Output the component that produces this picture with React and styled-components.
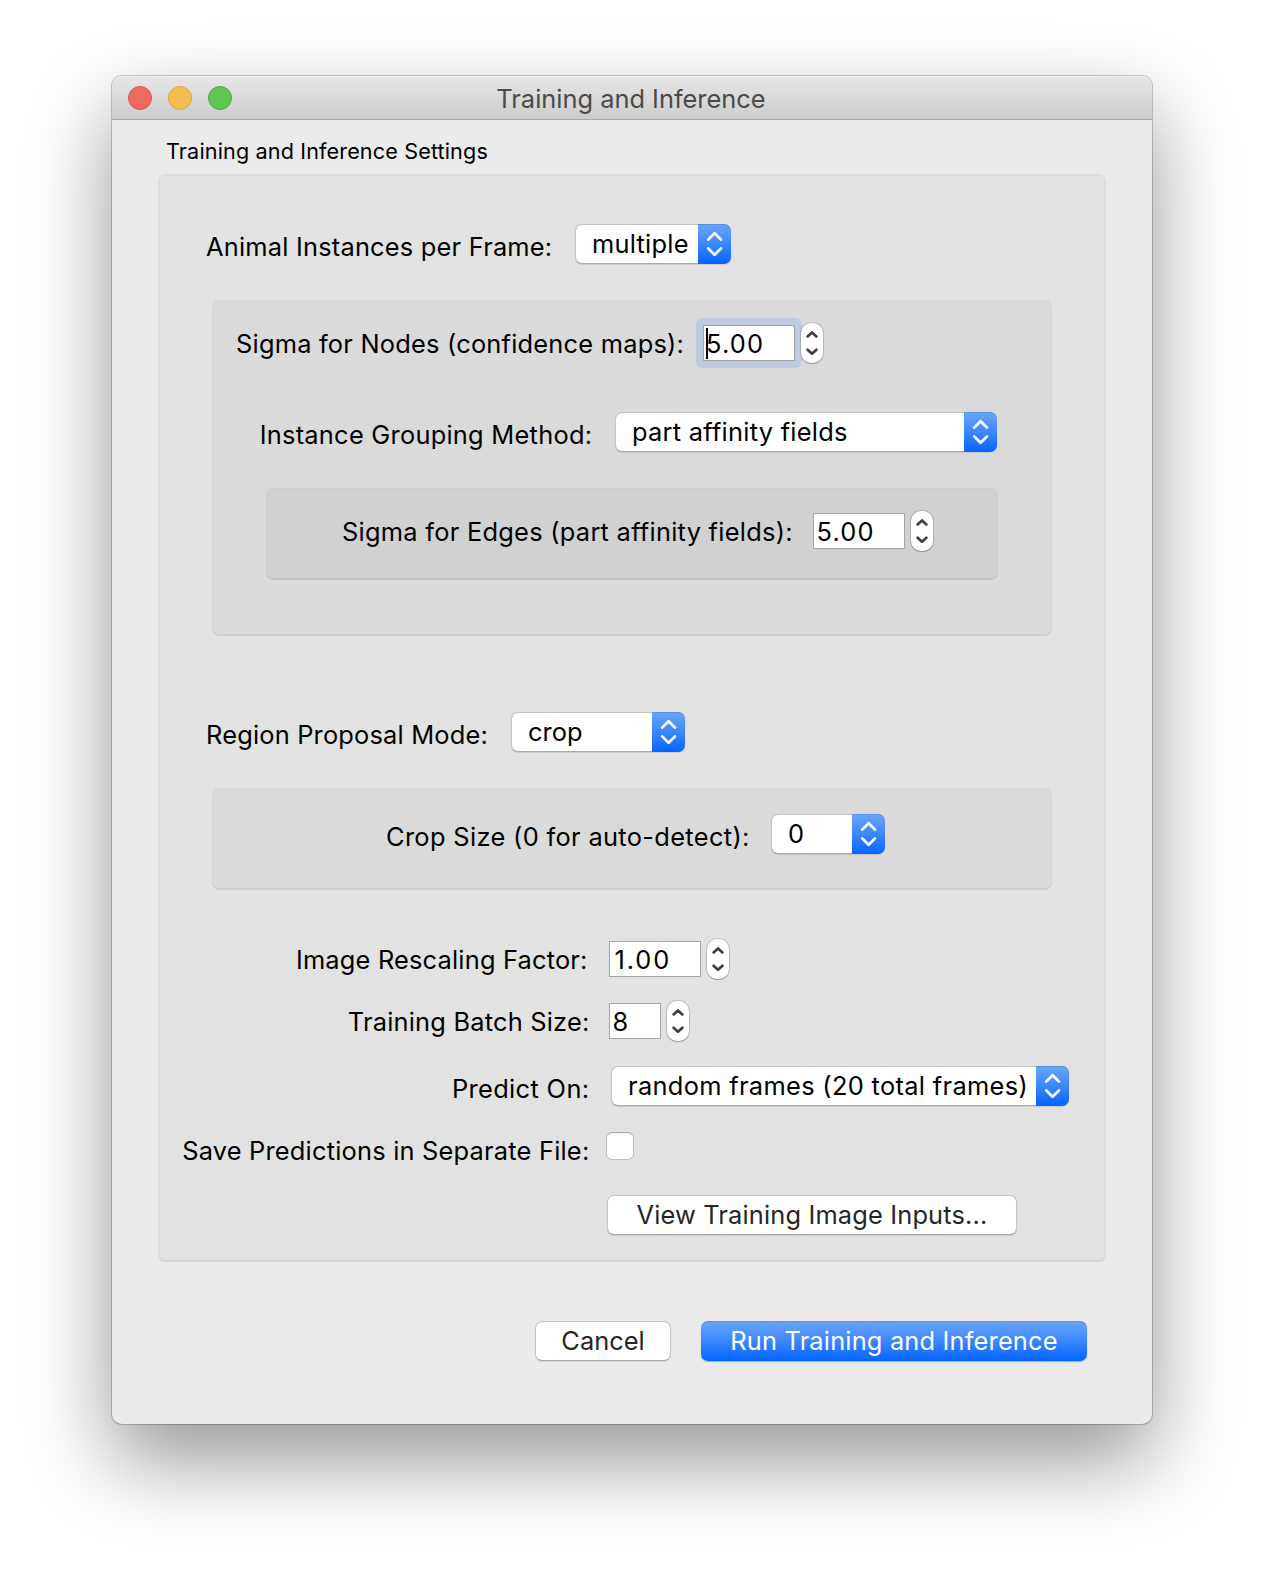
import React from "react";
import styled, { createGlobalStyle, css } from "styled-components";

const GlobalStyle = createGlobalStyle`
  *, *::before, *::after { box-sizing: border-box; }
  body { margin: 0; background: #fff; }
`;

const Desktop = styled.div`
  width: 1264px;
  height: 1572px;
  padding: 76px 112px;
  overflow: hidden;
  background: #fff;
  color: #000;
  font: 400 25.4px/30px Inter, "Liberation Sans", sans-serif;
  white-space: nowrap;
`;

const Window = styled.main`
  width: 1040px;
  height: 1348px;
  border-radius: 10px;
  background: #ebebeb;
  box-shadow: 0 0 0 1px rgba(0, 0, 0, 0.2), 0 36px 84px rgba(0, 0, 0, 0.42);
`;

const TitleBar = styled.header`
  display: grid;
  grid-template-columns: 1fr auto 1fr;
  align-items: center;
  height: 44px;
  padding: 0 16px;
  border-bottom: 1px solid #a9a9a9;
  border-radius: 10px 10px 0 0;
  background: linear-gradient(#e6e6e6, #cdcdcd);
  box-shadow: inset 0 1px 0 #f2f2f2;
`;

const Lights = styled.div`
  display: flex;
  gap: 16px;
`;

const Light = styled.span`
  width: 24px;
  height: 24px;
  border: 1px solid ${(p) => p.$edge};
  border-radius: 50%;
  background: ${(p) => p.$fill};
`;

const Title = styled.h1`
  margin: 2px 2px 0 0;
  color: #4a4a4a;
  font: inherit;
`;

const Caption = styled.h2`
  height: 54px;
  margin: 0;
  padding: 16px 0 0 54px;
  font-size: 21.6px;
  font-weight: 400;
  letter-spacing: 0.135px;
`;

const Panel = styled.section`
  width: ${(p) => p.$width}px;
  height: ${(p) => p.$height}px;
  margin: ${(p) => p.$top || 0}px 0 0 ${(p) => p.$left}px;
  padding-top: ${(p) => p.$pad}px;
  border-radius: 7px;
  background: ${(p) => p.$tone};
  box-shadow: inset 0 -2px 0 rgba(0, 0, 0, 0.04), inset 0 0 0 2px rgba(0, 0, 0, 0.014);
`;

const Row = styled.div`
  display: flex;
  align-items: center;
  height: ${(p) => p.$height || 40}px;
  margin-top: ${(p) => p.$top || 0}px;
  padding-left: ${(p) => p.$left || 0}px;
`;

const Label = styled.span`
  flex: none;
  width: ${(p) => p.$width}px;
  padding-top: ${(p) => p.$drop || 0}px;
  letter-spacing: ${(p) => p.$track}px;
`;

const FormLabel = styled(Label)`
  width: ${(p) => p.$width || 432}px;
  margin-right: ${(p) => p.$gap}px;
  padding-right: ${(p) => p.$inset || 0}px;
  text-align: right;
`;

const raised = css`
  border: 1px solid #c4c4c4;
  border-bottom-color: #a9a9a9;
  border-radius: 7px;
  background: #fff;
  background-clip: padding-box;
  box-shadow: 0 1px 1px rgba(0, 0, 0, 0.1);
`;

const Popup = styled.div`
  ${raised}
  display: flex;
  flex: none;
  width: ${(p) => p.$width}px;
  height: 40px;
`;

const PopupValue = styled.span`
  flex: 1;
  padding-left: 16px;
  line-height: 38px;
  letter-spacing: ${(p) => p.$track}px;
`;

const PopupArrows = styled.span`
  display: flex;
  align-items: center;
  justify-content: center;
  width: 33px;
  height: 40px;
  margin: -1px -1px -1px 0;
  border-radius: 0 7px 7px 0;
  background: linear-gradient(#6ba5fb, #3c87fc 50%, #0465ff);
  box-shadow: inset 0 1px 0 rgba(40, 80, 160, 0.25);
`;

const Field = styled.div`
  position: relative;
  flex: none;
  width: ${(p) => p.$width}px;
  height: 36px;
  padding-left: ${(p) => p.$inset}px;
  border: 1px solid #a5a5a5;
  background: #fff;
  line-height: 35px;
  letter-spacing: ${(p) => p.$track || 0}px;
`;

const FocusRing = styled.div`
  flex: none;
  margin: 0 -7px;
  padding: 7px;
  border-radius: 7px;
  background: #becbde;
`;

const Caret = styled.i`
  position: absolute;
  top: 2px;
  left: 2px;
  width: 2px;
  height: 31px;
  background: #000;
`;

const StepperBox = styled.div`
  position: relative;
  display: flex;
  align-items: center;
  justify-content: center;
  flex: none;
  width: 22px;
  height: 40px;
  margin-left: ${(p) => p.$gap}px;
  border-radius: 10px;
  background: #fff;
  box-shadow: 0 0 0 1px rgba(0, 0, 0, 0.14), 0 1px 1px rgba(0, 0, 0, 0.2);
`;

const CheckBox = styled.span`
  width: 28px;
  height: 28px;
  border: 1px solid #bdbdbd;
  border-top-color: #a6a6a6;
  border-radius: 6px;
  background: #fff;
  box-shadow: inset 0 2px 2px rgba(0, 0, 0, 0.06);
`;

const Button = styled.button`
  ${raised}
  width: ${(p) => p.$width}px;
  height: 40px;
  padding: 0;
  color: #262626;
  font: inherit;
  line-height: 36px;
  letter-spacing: ${(p) => p.$track}px;
  ${(p) =>
    p.$primary &&
    css`
      border: 0;
      background: linear-gradient(#6ba5fb, #3c87fc 50%, #0465ff);
      box-shadow: inset 0 1px 0 rgba(40, 80, 160, 0.25), 0 1px 1px rgba(0, 70, 190, 0.35);
      color: #fff;
      line-height: 38px;
    `}
`;

const Footer = styled.footer`
  display: flex;
  gap: 30px;
  margin-top: 59px;
  padding-left: 423px;
`;

function Select({ width, track, children }) {
  return (
    <Popup $width={width}>
      <PopupValue $track={track}>{children}</PopupValue>
      <PopupArrows>
        <svg width="17" height="26" viewBox="0 0 17 26" fill="none" stroke="#fff" strokeWidth="2.7" strokeLinecap="round" strokeLinejoin="round">
          <path d="M2.2 8.6 8.6 2.2l6.4 6.4M2.2 17.4l6.4 6.4 6.4-6.4" />
        </svg>
      </PopupArrows>
    </Popup>
  );
}

function Stepper({ gap = 6 }) {
  return (
    <StepperBox $gap={gap}>
      <svg width="12" height="26" viewBox="0 0 12 26" fill="none" stroke="#3f3f3f" strokeWidth="2.7" strokeLinecap="round" strokeLinejoin="round">
        <path d="M1.6 6.4 6 2.5l4.4 3.9M1.6 19.8 6 23.7l4.4-3.9" />
      </svg>
    </StepperBox>
  );
}

export default function App() {
  return (
    <Desktop>
      <GlobalStyle />
      <Window>
        <TitleBar>
          <Lights>
            <Light $fill="#ed6a5e" $edge="#d8564b" />
            <Light $fill="#f5bf4f" $edge="#dba63c" />
            <Light $fill="#61c554" $edge="#4fab42" />
          </Lights>
          <Title>Training and Inference</Title>
        </TitleBar>
        <Caption>Training and Inference Settings</Caption>

        <Panel $width={948} $height={1088} $left={46} $pad={50} $tone="#e2e2e2">
          <Row $left={48}>
            <Label $width={369} $drop={5} $track={0.21}>Animal Instances per Frame:</Label>
            <Select width={156} track={0.25}>multiple</Select>
          </Row>

          <Panel $width={840} $height={336} $left={54} $top={36} $pad={18} $tone="#dadada">
            <Row $height={50} $left={24}>
              <Label $width={467} $drop={1} $track={0.22}>Sigma for Nodes (confidence maps):</Label>
              <FocusRing>
                <Field $width={92} $inset={2} $track={1.18}>
                  5.00
                  <Caret />
                </Field>
              </FocusRing>
              <Stepper />
            </Row>
            <Row $left={47.7} $top={44}>
              <Label $width={355.3} $drop={5} $track={0.253}>Instance Grouping Method:</Label>
              <Select width={382} track={0.259}>part affinity fields</Select>
            </Row>
            <Panel $width={732} $height={92} $left={54} $top={36} $pad={22} $tone="#d1d1d1">
              <Row $height={42} $left={76}>
                <Label $width={471} $drop={1} $track={0.27}>Sigma for Edges (part affinity fields):</Label>
                <Field $width={92} $inset={2.5} $track={1.18}>5.00</Field>
                <Stepper />
              </Row>
            </Panel>
          </Panel>

          <Row $left={48} $top={76}>
            <Label $width={305} $drop={5} $track={0.19}>Region Proposal Mode:</Label>
            <Select width={174} track={0.04}>crop</Select>
          </Row>

          <Panel $width={840} $height={102} $left={54} $top={36} $pad={26} $tone="#dadada">
            <Row $left={174}>
              <Label $width={385} $drop={5} $track={0.34}>Crop Size (0 for auto-detect):</Label>
              <Select width={114}>0</Select>
            </Row>
          </Panel>

          <Row $height={42} $top={48}>
            <FormLabel $gap={19} $inset={2.4} $drop={1} $track={0.19}>Image Rescaling Factor:</FormLabel>
            <Field $width={92} $inset={4.5} $track={1.9}>1.00</Field>
            <Stepper />
          </Row>
          <Row $height={42} $top={20}>
            <FormLabel $gap={19} $inset={0.6} $drop={1} $track={0.2}>Training Batch Size:</FormLabel>
            <Field $width={52} $inset={2.5}>8</Field>
            <Stepper />
          </Row>
          <Row $top={24}>
            <FormLabel $gap={21} $inset={0.6} $drop={5} $track={0.35}>Predict On:</FormLabel>
            <Select width={458} track={0.327}>random frames (20 total frames)</Select>
          </Row>
          <Row $height={28} $top={26}>
            <FormLabel $gap={16} $inset={0.6} $drop={9} $track={0.21}>Save Predictions in Separate File:</FormLabel>
            <CheckBox />
          </Row>
          <Row $top={35} $left={449}>
            <Button $width={410} $track={0.16}>View Training Image Inputs...</Button>
          </Row>
        </Panel>

        <Footer>
          <Button $width={136}>Cancel</Button>
          <Button $width={386} $track={0.18} $primary>Run Training and Inference</Button>
        </Footer>
      </Window>
    </Desktop>
  );
}
